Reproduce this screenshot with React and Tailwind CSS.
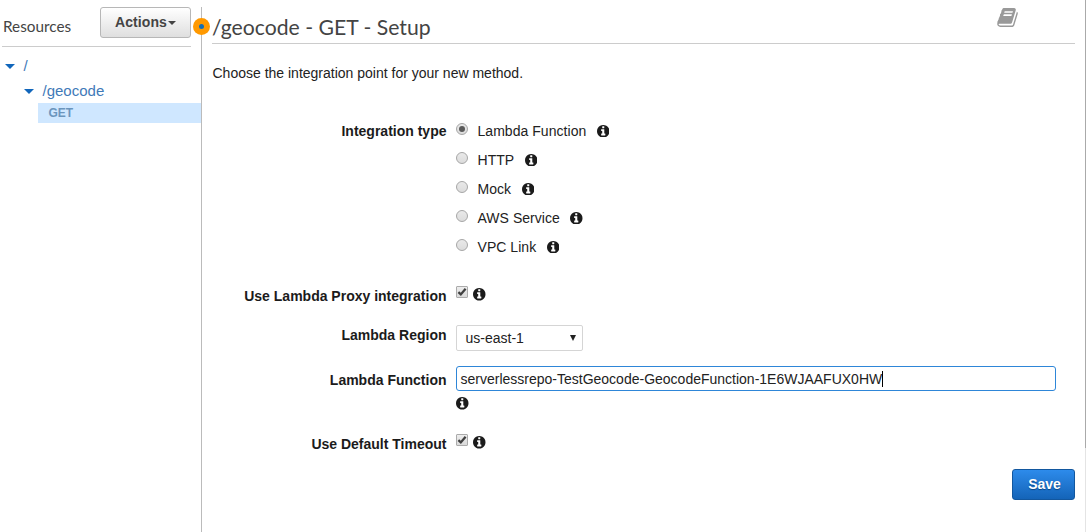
import React from "react";

function InfoIcon({ className = "" }) {
  return (
    <svg viewBox="128 128 1536 1536" className={"h-[12.5px] w-[12.5px] shrink-0 fill-[#1b1b1b] " + className}>
      <path d="M1152 1376v-160q0-14-9-23t-23-9h-96v-512q0-14-9-23t-23-9h-320q-14 0-23 9t-9 23v160q0 14 9 23t23 9h96v320h-96q-14 0-23 9t-9 23v160q0 14 9 23t23 9h448q14 0 23-9t9-23zm-128-896v-160q0-14-9-23t-23-9h-192q-14 0-23 9t-9 23v160q0 14 9 23t23 9h192q14 0 23-9t9-23zm640 416q0 209-103 385.5t-279.5 279.5-385.5 103-385.5-103-279.5-279.5-103-385.5 103-385.5 279.5-279.5 385.5-103 385.5 103 279.5 279.5 103 385.5z" />
    </svg>
  );
}

function BookIcon() {
  return (
    <svg viewBox="64 128 1664 1536" className="h-[19px] w-[21px] fill-[#999]">
      <path d="M1703 478q40 57 18 129l-275 906q-19 64-76.5 107.5t-122.5 43.5h-923q-77 0-148.5-53.5t-99.5-131.5q-24-67-2-127 0-4 3-27t4-37q1-8-3-21.5t-3-19.5q2-11 8-21t16.5-23.5 16.5-23.5q23-38 45-91.5t30-91.5q3-10 .5-30t-.5-28q3-11 17-28t17-23q21-36 42-92t25-90q1-9-2.5-32t.5-28q4-13 22-30.5t22-22.5q19-26 42.5-84.5t27.5-96.5q1-8-3-25.5t-2-26.5q2-8 9-18t18-23 17-21q8-12 16.5-30.5t15-35 16-36 19.5-32 26.5-23.5 36-11.5 47.5 5.5l-1 3q38-9 51-9h761q74 0 114 56t18 130l-274 906q-36 119-71.5 153.5t-128.5 34.5h-869q-27 0-38 15-11 16-1 43 24 70 144 70h923q29 0 56-15.5t35-41.5l300-987q7-22 5-57 38 15 59 43zm-1064 2q-4 13 2 22.5t20 9.5h608q13 0 25.5-9.5t16.5-22.5l21-64q4-13-2-22.5t-20-9.5h-608q-13 0-25.5 9.5t-16.5 22.5zm-83 256q-4 13 2 22.5t20 9.5h608q13 0 25.5-9.5t16.5-22.5l21-64q4-13-2-22.5t-20-9.5h-608q-13 0-25.5 9.5t-16.5 22.5z" />
    </svg>
  );
}

function Caret({ className = "" }) {
  return (
    <svg viewBox="0 0 8 4" preserveAspectRatio="none" className={className}>
      <path d="M0 0h8L4 4z" />
    </svg>
  );
}

function Radio({ checked }) {
  return (
    <span className="flex h-3 w-3 shrink-0 items-center justify-center rounded-full border border-[#a6a6a6] bg-linear-to-b from-[#e9e9e9] to-[#dcdcdc]">
      {checked && <span className="h-1.5 w-1.5 rounded-full bg-[#5a5a5a]" />}
    </span>
  );
}

function Checkbox() {
  return (
    <span className="flex h-3 w-3 shrink-0 items-center justify-center rounded-[1px] border border-[#ababab] bg-linear-to-b from-[#ededed] to-[#dadada]">
      <svg viewBox="0 0 10 10" className="h-2.5 w-2.5 fill-none stroke-[#404040] stroke-[2.3]">
        <path d="M1.4 5.2 3.8 7.4 8.6 1.8" />
      </svg>
    </span>
  );
}

function Label({ children }) {
  return <div className="w-[234.5px] shrink-0 text-right font-bold whitespace-nowrap text-[#1b1b1b]">{children}</div>;
}

const types = ["Lambda Function", "HTTP", "Mock", "AWS Service", "VPC Link"];

export default function App() {
  return (
    <div className="flex h-[532px] w-[1086px] overflow-hidden bg-white font-['Liberation_Sans',Arial,sans-serif] text-sm leading-5 text-[#222]">
      <aside className="w-[201px] shrink-0 pt-[7px]">
        <div className="ml-0.5 flex h-10 w-[189px] border-b border-[#ccc]">
          <h2 className="w-[98px] pt-2 pl-px font-[Lato,sans-serif] text-[15.3px] leading-[22px] text-[#444]">Resources</h2>
          <button className="flex h-[31px] w-[91px] items-center justify-center gap-px rounded-[3px] border border-[#b7b7b7] bg-linear-to-b from-white to-[#dfdfdf] pb-0.5 font-bold tracking-[0.1px] text-[#444]">
            Actions
            <Caret className="mt-0.5 h-1 w-2 fill-[#444]" />
          </button>
        </div>
        <nav className="pt-[9px] text-[15px] text-[#3f7ab8]">
          <div className="flex h-5 items-center pl-[5px]">
            <Caret className="h-[5px] w-[10px] fill-[#1166bb]" />
            <span className="ml-[8.5px]">/</span>
          </div>
          <div className="mt-[5px] flex h-5 items-center pl-6">
            <Caret className="h-[5px] w-[10px] fill-[#1166bb]" />
            <span className="ml-[8.5px]">/geocode</span>
          </div>
          <div className="mt-0.5 ml-[38px] h-5 bg-[#cfe7ff] pl-[10.5px] text-[12px] font-bold text-[#6b95bd]">GET</div>
        </nav>
      </aside>

      <div className="relative mt-[7px] w-px shrink-0 bg-[#bbb]">
        <span className="absolute top-[11px] -left-2 flex h-[17px] w-[17px] items-center justify-center rounded-full bg-[#ff9900]">
          <span className="h-[5px] w-[5px] rounded-full bg-[#146eb4]" />
        </span>
      </div>

      <main className="w-[883px] shrink-0 pt-[7px] pl-2.5">
        <header className="flex h-[37px] w-[863px] justify-between border-b border-[#ccc]">
          <h1 className="pt-[7px] font-[Lato,sans-serif] text-[21.2px] leading-[26px] text-[#444]">/geocode - GET - Setup</h1>
          <div className="mt-px mr-[57px]"><BookIcon /></div>
        </header>
        <p className="mt-[19px] pl-[0.5px]">Choose the integration point for your new method.</p>

        <section className="mt-[38px] flex">
          <Label>Integration type</Label>
          <div className="ml-[9.5px] flex flex-col gap-[9px]">
            {types.map((type, i) => (
              <label key={type} className="flex h-5 items-center">
                <span className="-mt-1"><Radio checked={i === 0} /></span>
                <span className="ml-[9.5px] tracking-[0.04px]">{type}</span>
                <InfoIcon className="ml-[10.5px]" />
              </label>
            ))}
          </div>
        </section>

        <section className="mt-[29px] flex h-5">
          <Label>Use Lambda Proxy integration</Label>
          <div className="ml-[9.5px] flex items-start gap-[5px]">
            <Checkbox />
            <InfoIcon className="mt-0.5" />
          </div>
        </section>

        <section className="mt-[19px] flex h-[26px]">
          <Label>Lambda Region</Label>
          <div className="ml-[9.5px] flex h-[26px] w-[127px] items-center justify-between rounded-[2px] border border-[#d5d5d5] pr-[6px] pl-[8.5px]">
            us-east-1
            <svg viewBox="0 0 6 6" className="h-1.5 w-1.5 fill-[#222]"><path d="M0 0h6L3 6z" /></svg>
          </div>
        </section>

        <section className="mt-[15px] flex h-[44px]">
          <div className="mt-1"><Label>Lambda Function</Label></div>
          <div className="ml-[9.5px]">
            <div className="flex h-[25px] w-[600px] items-center rounded-[3px] border border-[#2e86d8] pl-[3.5px]">
              <span>serverlessrepo-TestGeocode-GeocodeFunction-1E6WJAAFUX0HW</span>
              <span className="-ml-[0.5px] h-4 w-px bg-black" />
            </div>
            <InfoIcon className="mt-1.5" />
          </div>
        </section>

        <section className="mt-6 flex h-5">
          <Label>Use Default Timeout</Label>
          <div className="ml-[9.5px] flex items-start gap-[5px]">
            <Checkbox />
            <InfoIcon className="mt-0.5" />
          </div>
        </section>

        <div className="mt-[15px] flex justify-end pr-2.5">
          <button className="h-[31px] w-[63px] rounded-[3px] border border-[#12579f] bg-linear-to-b from-[#2d8beb] to-[#1464b8] pb-0.5 pl-0.5 font-bold text-white [text-shadow:0_1px_1px_#0b4480]">Save</button>
        </div>
      </main>
      <div className="w-px shrink-0 bg-[#e4e4e4]">
        <div className="h-[448px] bg-[#aaa]" />
      </div>
    </div>
  );
}
